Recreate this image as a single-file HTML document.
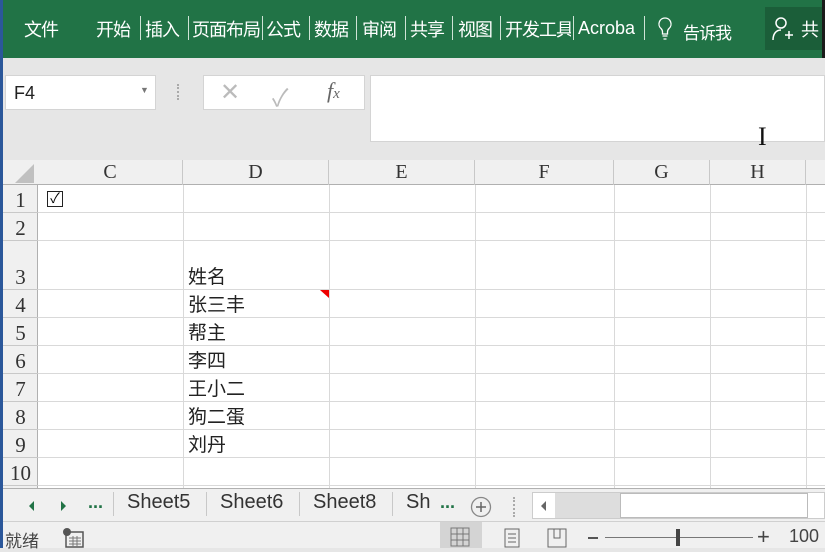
<!DOCTYPE html>
<html><head><meta charset="utf-8"><style>
*{margin:0;padding:0;box-sizing:border-box}
body{width:825px;height:548px;overflow:hidden;position:relative;background:#e6e6e6;font-family:"Liberation Sans","Noto Sans CJK SC",sans-serif}
.a{position:absolute}
.rib{left:0;top:0;width:825px;height:58px;background:#217346;color:#fff;font-size:18px}
.rib span{position:absolute;top:16px;white-space:nowrap;letter-spacing:-1px}
.sep{position:absolute;top:16px;width:1px;height:24px;background:#cfe3d6}
.hl{position:absolute;height:1px;background:#d9d9d9;left:38px;width:787px}
.vl{position:absolute;width:1px;background:#d9d9d9;top:185px;height:303px}
.ch{position:absolute;top:160px;height:25px;text-align:center;font-family:"Liberation Serif",serif;font-size:20px;color:#333;line-height:25px;border-right:1px solid #c8c8c8}
.rh{position:absolute;left:3px;width:35px;text-align:center;font-family:"Liberation Serif",serif;font-size:21px;color:#333;border-bottom:1px solid #c8c8c8}
.tx{position:absolute;left:188px;font-family:"Noto Sans CJK SC",sans-serif;font-size:19px;color:#222;line-height:22px}
.tab{position:absolute;top:491px;font-size:20px;color:#333}
</style></head><body>
<div class="a" style="left:0;top:0;width:3px;height:548px;background:#2b579a;z-index:5"></div>
<div class="a rib">
<span style="left:24px">文件</span>
<span style="left:96px">开始</span><div class="sep" style="left:140px"></div>
<span style="left:145px">插入</span><div class="sep" style="left:188px"></div>
<span style="left:192px;width:68px;overflow:hidden">页面布局</span><div class="sep" style="left:262px"></div>
<span style="left:266px">公式</span><div class="sep" style="left:309px"></div>
<span style="left:314px">数据</span><div class="sep" style="left:356px"></div>
<span style="left:362px">审阅</span><div class="sep" style="left:405px"></div>
<span style="left:410px">共享</span><div class="sep" style="left:452px"></div>
<span style="left:458px">视图</span><div class="sep" style="left:500px"></div>
<span style="left:505px;width:66px;overflow:hidden">开发工具</span><div class="sep" style="left:573px"></div>
<span style="left:578px;top:18px;letter-spacing:0">Acroba</span><div class="sep" style="left:644px"></div>
<svg class="a" style="left:657px;top:16px" width="16" height="26" viewBox="0 0 16 26"><path d="M8 2a6 6 0 0 0-4 10.5c1 1 1.5 2 1.5 3.5v2h5v-2c0-1.5.5-2.5 1.5-3.5A6 6 0 0 0 8 2zM5.5 20h5M6.5 23h3" stroke="#fff" fill="none" stroke-width="1.3"/></svg>
<span style="left:683px;font-size:17px;top:19px">告诉我</span>
<div class="a" style="left:765px;top:7px;width:57px;height:43px;background:#1b5e39"></div>
<svg class="a" style="left:771px;top:16px" width="24" height="26" viewBox="0 0 24 26"><circle cx="10" cy="7" r="5" stroke="#fff" fill="none" stroke-width="1.5"/><path d="M2 24c0-6 3-10 8-10M14 19h8M18 15v8" stroke="#fff" fill="none" stroke-width="1.5"/></svg>
<span style="left:801px">共</span>
<div class="a" style="left:822px;top:0;width:3px;height:58px;background:#1a1a1a"></div>
</div>
<div class="a" style="left:5px;top:75px;width:151px;height:35px;background:#fff;border:1px solid #d4d4d4;font-size:18px;color:#222;padding:7px 0 0 8px">F4<span style="position:absolute;left:134px;top:9px;font-size:9px;color:#777">▼</span></div>
<div class="a" style="left:177px;top:84px;width:3px;height:16px;border-left:2px dotted #aaa"></div>
<div class="a" style="left:203px;top:75px;width:162px;height:35px;background:#fff;border:1px solid #d4d4d4"></div>
<span class="a" style="left:220px;top:78px;font-size:24px;color:#bbb">✕</span>
<span class="a" style="left:272px;top:78px;font-size:24px;color:#bbb">✓</span>
<span class="a" style="left:327px;top:78px;font-size:22px;color:#666;font-family:'Liberation Serif',serif;font-style:italic">f<span style="font-size:15px">x</span></span>
<div class="a" style="left:370px;top:75px;width:455px;height:67px;background:#fff;border:1px solid #d4d4d4"></div>
<span class="a" style="left:758px;top:122px;font-size:26px;font-family:'Liberation Serif',serif;color:#111">I</span>
<div class="a" style="left:3px;top:160px;width:822px;height:328px;background:#fff"></div>
<div class="a" style="left:3px;top:160px;width:822px;height:25px;background:#f0f0f0;border-bottom:1px solid #b0b0b0"></div>
<div class="a" style="left:3px;top:185px;width:35px;height:303px;background:#f0f0f0;border-right:1px solid #b0b0b0"></div>
<svg class="a" style="left:14px;top:164px" width="22" height="20"><path d="M20 0V19H1z" fill="#c0c0c0"/></svg>
<div class="ch" style="left:38px;width:145px">C</div>
<div class="ch" style="left:183px;width:146px">D</div>
<div class="ch" style="left:329px;width:146px">E</div>
<div class="ch" style="left:475px;width:139px">F</div>
<div class="ch" style="left:614px;width:96px">G</div>
<div class="ch" style="left:710px;width:96px">H</div>
<div class="vl" style="left:183px"></div><div class="vl" style="left:329px"></div><div class="vl" style="left:475px"></div><div class="vl" style="left:614px"></div><div class="vl" style="left:710px"></div><div class="vl" style="left:806px"></div>
<div class="hl" style="top:212px"></div><div class="hl" style="top:240px"></div><div class="hl" style="top:289px"></div><div class="hl" style="top:317px"></div><div class="hl" style="top:345px"></div><div class="hl" style="top:373px"></div><div class="hl" style="top:401px"></div><div class="hl" style="top:429px"></div><div class="hl" style="top:457px"></div><div class="hl" style="top:485px"></div>
<div class="rh" style="top:185px;height:28px;line-height:30px">1</div>
<div class="rh" style="top:213px;height:28px;line-height:30px">2</div>
<div class="rh" style="top:241px;height:49px;line-height:72px">3</div>
<div class="rh" style="top:290px;height:28px;line-height:30px">4</div>
<div class="rh" style="top:318px;height:28px;line-height:30px">5</div>
<div class="rh" style="top:346px;height:28px;line-height:30px">6</div>
<div class="rh" style="top:374px;height:28px;line-height:30px">7</div>
<div class="rh" style="top:402px;height:28px;line-height:30px">8</div>
<div class="rh" style="top:430px;height:28px;line-height:30px">9</div>
<div class="rh" style="top:458px;height:28px;line-height:30px">10</div>
<div class="a" style="left:47px;top:191px;width:16px;height:16px;border:1.5px solid #222;font-size:14px;line-height:13px;text-align:center">✓</div>
<div class="tx" style="top:265px">姓名</div>
<div class="tx" style="top:293px">张三丰</div>
<div class="tx" style="top:321px">帮主</div>
<div class="tx" style="top:349px">李四</div>
<div class="tx" style="top:377px">王小二</div>
<div class="tx" style="top:405px">狗二蛋</div>
<div class="tx" style="top:433px">刘丹</div>
<svg class="a" style="left:320px;top:290px" width="9" height="8"><path d="M0 0H9V8z" fill="#e00"/></svg>
<div class="a" style="left:3px;top:488px;width:822px;height:33px;background:#f0f0f0;border-top:1px solid #b0b0b0"></div>
<svg class="a" style="left:25px;top:499px" width="50" height="14"><path d="M9 2L4 7l5 5z M36 2l5 5-5 5z" fill="#217346"/></svg>
<span class="a" style="left:88px;top:492px;font-size:18px;color:#217346;font-weight:bold">...</span>
<div class="a" style="left:113px;top:492px;width:1px;height:24px;background:#c8c8c8"></div>
<span class="tab" style="left:127px">Sheet5</span>
<div class="a" style="left:206px;top:492px;width:1px;height:24px;background:#c8c8c8"></div>
<span class="tab" style="left:220px">Sheet6</span>
<div class="a" style="left:299px;top:492px;width:1px;height:24px;background:#c8c8c8"></div>
<span class="tab" style="left:313px">Sheet8</span>
<div class="a" style="left:392px;top:492px;width:1px;height:24px;background:#c8c8c8"></div>
<span class="tab" style="left:406px">Sh</span>
<span class="a" style="left:440px;top:492px;font-size:18px;color:#217346;font-weight:bold">...</span>
<svg class="a" style="left:470px;top:496px" width="22" height="22"><circle cx="11" cy="11" r="9.5" stroke="#888" fill="none" stroke-width="1.3"/><path d="M11 6v10M6 11h10" stroke="#666" stroke-width="1.5"/></svg>
<div class="a" style="left:513px;top:497px;width:2px;height:20px;border-left:2px dotted #aaa"></div>
<div class="a" style="left:532px;top:492px;width:293px;height:27px;background:#fff;border:1px solid #ccc"></div>
<svg class="a" style="left:540px;top:500px" width="8" height="12"><path d="M6 1L1 6l5 5z" fill="#666"/></svg>
<div class="a" style="left:555px;top:493px;width:65px;height:25px;background:#ddd"></div>
<div class="a" style="left:620px;top:493px;width:188px;height:25px;background:#fff;border:1px solid #bbb"></div>
<div class="a" style="left:3px;top:521px;width:822px;height:27px;background:#f0f0f0;border-top:1px solid #d0d0d0"></div>
<span class="a" style="left:5px;top:527px;font-size:17px;color:#444">就绪</span>
<svg class="a" style="left:62px;top:528px" width="22" height="20"><circle cx="5" cy="4" r="4" fill="#555"/><rect x="4" y="4" width="17" height="15" fill="none" stroke="#555" stroke-width="1.5"/><path d="M7 10h12M7 13h12M7 16h12M11 8v11M15 8v11" stroke="#777" stroke-width="1"/></svg>
<div class="a" style="left:440px;top:522px;width:42px;height:26px;background:#d4d4d4"></div>
<svg class="a" style="left:450px;top:527px" width="20" height="20"><path d="M1 1h18v18H1zM7 1v18M13 1v18M1 7h18M1 13h18" stroke="#777" fill="none"/></svg>
<svg class="a" style="left:504px;top:528px" width="16" height="20"><rect x="1" y="1" width="14" height="18" fill="none" stroke="#666"/><path d="M4 6h8M4 10h8M4 14h8" stroke="#666"/></svg>
<svg class="a" style="left:547px;top:528px" width="20" height="20"><path d="M1 1h18v18H1zM7 1v9h6V1" stroke="#666" fill="none"/></svg>
<div class="a" style="left:588px;top:537px;width:10px;height:2px;background:#555"></div>
<div class="a" style="left:605px;top:537px;width:148px;height:1px;background:#777"></div>
<div class="a" style="left:676px;top:529px;width:4px;height:17px;background:#444"></div>
<span class="a" style="left:757px;top:524px;font-size:22px;color:#444">+</span>
<span class="a" style="left:789px;top:526px;font-size:18px;color:#444">100</span>
</body></html>
